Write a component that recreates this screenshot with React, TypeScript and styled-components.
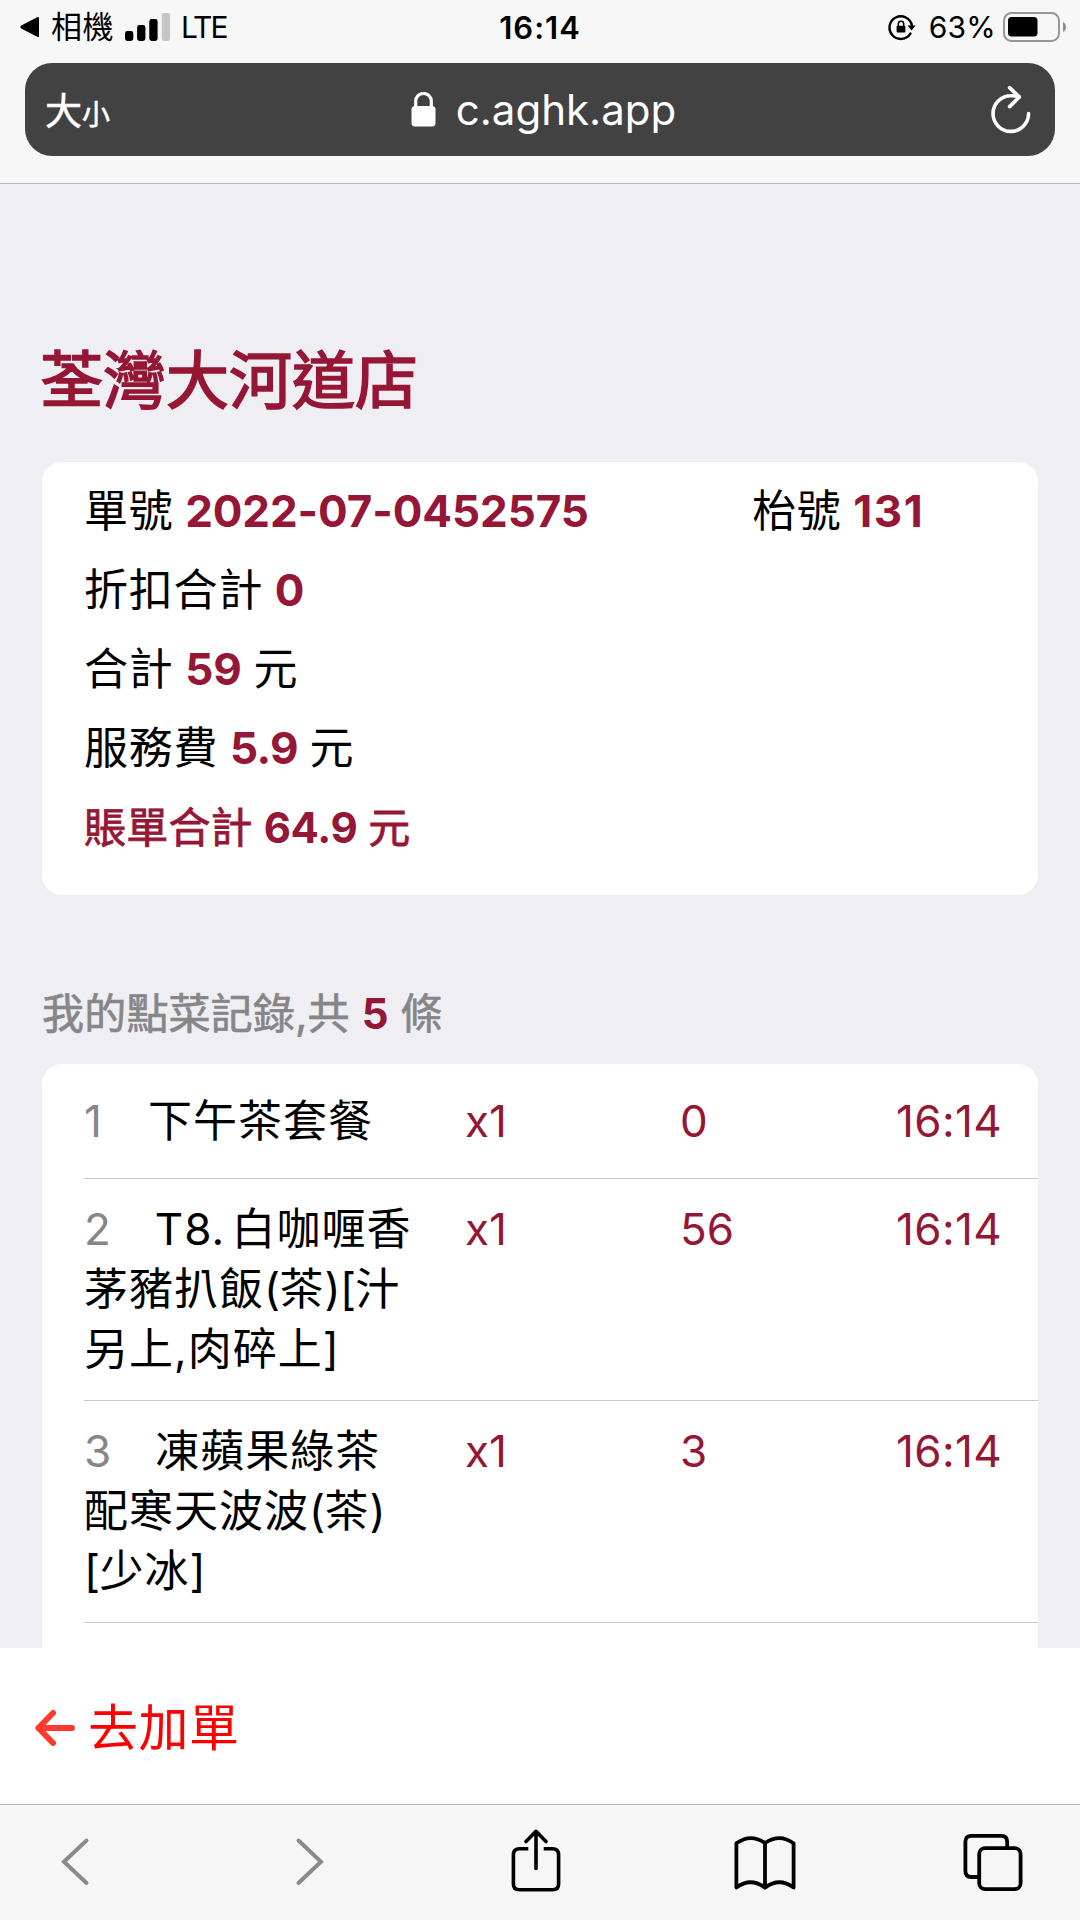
import React from 'react';
import styled, { createGlobalStyle } from 'styled-components';

const crimson = '#951735';

const GlobalStyle = createGlobalStyle`
  * { box-sizing: border-box; }
  body {
    margin: 0;
    background: #efeef3;
    font-family: Inter, "Noto Sans CJK TC", sans-serif;
    color: #000;
  }
`;

const Screen = styled.div`
  width: 1080px;
  height: 1920px;
  display: flex;
  flex-direction: column;
  overflow: hidden;
  background: #efeef3;
`;

const BrowserHeader = styled.header`
  flex: none;
  height: 184px;
  background: #f7f7f7;
  border-bottom: 1px solid #b4b4b6;
`;

const StatusBar = styled.div`
  height: 63px;
  padding: 0 14px 9px 20px;
  display: grid;
  grid-template-columns: 1fr auto 1fr;
  align-items: center;
  font-size: 30px;
`;

const StatusGroup = styled.div<{ $end?: boolean }>`
  display: flex;
  align-items: center;
  justify-content: ${(p) => (p.$end ? 'flex-end' : 'flex-start')};
`;

const BackApp = styled.span`
  margin: 0 11px 0 11px;
  font-size: 31px;
  line-height: 40px;
  letter-spacing: 0.5px;
`;

const Carrier = styled.span`
  margin-left: 10px;
  font-size: 30px;
  letter-spacing: -2px;
`;

const Clock = styled.span`
  margin-right: 6px;
  font-size: 31px;
  font-weight: 600;
  letter-spacing: 1px;
`;

const BatteryText = styled.span`
  margin: 0 7px 0 13px;
  font-size: 30px;
  letter-spacing: 0.2px;
`;

const AddressBar = styled.div`
  height: 93px;
  margin: 0 25px 0 25px;
  padding: 0 24px 0 20px;
  border-radius: 27px;
  background: #424242;
  color: #fff;
  display: grid;
  grid-template-columns: 1fr auto 1fr;
  align-items: center;
`;

const TextSize = styled.div`
  padding-top: 7px;
  font-size: 37px;
  line-height: 60px;
  -webkit-text-stroke: 0.6px #fff;
`;

const SmallGlyph = styled.span`
  font-size: 28px;
`;

const Url = styled.div`
  display: flex;
  align-items: center;
  gap: 20px;
  padding-left: 11px;
  font-size: 42px;
`;

const ReloadSlot = styled.div`
  display: flex;
  justify-content: flex-end;
`;

const Page = styled.main`
  flex: 1;
  min-height: 0;
  overflow: hidden;
  padding: 158px 42px 0 42px;
`;

const StoreName = styled.h1`
  margin: 0 0 0 -2px;
  height: 120px;
  line-height: 76px;
  font-size: 63px;
  font-weight: 400;
  -webkit-text-stroke: 1.7px ${crimson};
  color: ${crimson};
`;

const Card = styled.section`
  background: #fff;
  border-radius: 20px;
`;

const BillCard = styled(Card)`
  height: 433px;
  padding: 10px 42px 0;
`;

const BillRow = styled.div<{ $total?: boolean }>`
  display: grid;
  grid-template-columns: 668px 1fr;
  height: 79px;
  line-height: 79px;
  white-space: pre;
  font-size: ${(p) => (p.$total ? 42 : 44)}px;
  -webkit-text-stroke: ${(p) => (p.$total ? 0.8 : 0)}px ${crimson};
  letter-spacing: ${(p) => (p.$total ? 0.2 : 0.8)}px;
  word-spacing: ${(p) => (p.$total ? -1.2 : -1.6)}px;
  color: ${(p) => (p.$total ? crimson : '#000')};
`;

const Value = styled.b<{ $spacing?: number }>`
  font-weight: 700;
  letter-spacing: ${(p) => p.$spacing ?? 0}px;
  -webkit-text-stroke: 0;
  color: ${crimson};
`;

const SectionTitle = styled.h2`
  margin: 0;
  height: 169px;
  padding-top: 89px;
  line-height: 60px;
  font-size: 42px;
  font-weight: 400;
  letter-spacing: 0.2px;
  -webkit-text-stroke: 0.7px #868689;
  color: #868689;
`;

const OrderCard = styled(Card)`
  height: 700px;
  padding-left: 42px;
`;

const OrderRow = styled.div<{ $single?: boolean }>`
  display: grid;
  grid-template-columns: 381px 215px 215px 1fr;
  padding: ${(p) => (p.$single ? '27px 0' : '20px 0 21px')};
  line-height: 60px;
  font-size: 44px;
  border-bottom: 1px solid #c9c9cc;
  color: ${crimson};
`;

const Dish = styled.div`
  display: flex;
  flex-direction: column;
  color: #000;
`;

const DishLine = styled.div`
  display: flex;
  white-space: pre;
  letter-spacing: 1px;
  word-spacing: -7px;
`;

const Bracket = styled.span`
  letter-spacing: -0.6px;
`;

const Index = styled.span<{ $single?: boolean }>`
  margin-right: ${(p) => (p.$single ? 45 : 43)}px;
  color: #868689;
`;

const Time = styled.span`
  padding-left: 1px;
  letter-spacing: 0.4px;
`;

const ActionBar = styled.div`
  flex: none;
  height: 156px;
  padding: 0 0 0 35px;
  display: flex;
  align-items: flex-start;
  background: #fff;
`;

const AddOrder = styled.a`
  display: flex;
  align-items: center;
  gap: 12px;
  height: 160px;
  font-size: 50px;
  color: #f00;
`;

const AddLabel = styled.span`
  padding-bottom: 8px;
  letter-spacing: 0.5px;
`;

const Toolbar = styled.nav`
  flex: none;
  height: 116px;
  border-top: 1px solid #b8b8ba;
  background: #f6f6f6;
  display: grid;
  grid-template-columns: 150px 320px 131px 327px 129px;
  align-items: start;
  justify-items: center;
  padding-top: 22px;
`;

const orders = [
  { lines: ['下午茶套餐'], qty: 'x1', price: '0', time: '16:14' },
  { lines: ['T8. 白咖喱香', '茅豬扒飯(茶)[汁', '另上,肉碎上]'], qty: 'x1', price: '56', time: '16:14' },
  { lines: ['凍蘋果綠茶', '配寒天波波(茶)', '[少冰]'], qty: 'x1', price: '3', time: '16:14' },
];

const withBrackets = (text: string) =>
  text.split(/([()[\]]+)/).map((part, i) => (i % 2 ? <Bracket key={i}>{part}</Bracket> : part));

const SignalIcon = () => (
  <svg width="46" height="30" viewBox="0 0 46 30">
    <rect x="0" y="19" width="8.3" height="10" rx="2.4" />
    <rect x="12.1" y="13" width="8.3" height="16" rx="2.4" />
    <rect x="24.3" y="7" width="8.3" height="22" rx="2.4" />
    <rect x="36.8" y="1" width="8.3" height="28" rx="2.4" fill="#c5c5c5" />
  </svg>
);

const RotationLockIcon = () => (
  <svg width="28" height="28" viewBox="0 0 28 28" fill="none" stroke="#000" strokeWidth="2.4">
    <path d="M23.9 12.5 A11.3 11.3 0 1 0 22.4 20.6" strokeLinecap="round" />
    <path d="M19.6 12.4 H27.6 L23.6 17.6 Z" fill="#000" stroke="none" />
    <rect x="8.6" y="12.8" width="8.8" height="6.8" rx="1" fill="#000" stroke="none" />
    <path d="M10.3 13.4 V11 a2.7 2.7 0 0 1 5.4 0 V13.4" strokeWidth="1.5" />
  </svg>
);

const BatteryIcon = () => (
  <svg width="63" height="30" viewBox="0 0 63 30">
    <rect x="1" y="1" width="55" height="28" rx="7.5" fill="none" stroke="#979797" strokeWidth="2" />
    <rect x="5" y="5" width="29.5" height="19.6" rx="3.5" />
    <path d="M60 10 Q63 11.5 63 15 Q63 18.5 60 20 Z" fill="#8d8d8d" />
  </svg>
);

export default function App() {
  return (
    <Screen>
      <GlobalStyle />
      <BrowserHeader>
        <StatusBar>
          <StatusGroup>
            <svg width="20" height="22" viewBox="0 0 20 22">
              <path d="M19 2.2 V19.8 Q19 21.6 17.2 20.7 L1.2 12.4 Q-0.6 11 1.2 9.6 L17.2 1.3 Q19 0.4 19 2.2 Z" />
            </svg>
            <BackApp>相機</BackApp>
            <SignalIcon />
            <Carrier>LTE</Carrier>
          </StatusGroup>
          <Clock>16:14</Clock>
          <StatusGroup $end>
            <RotationLockIcon />
            <BatteryText>63%</BatteryText>
            <BatteryIcon />
          </StatusGroup>
        </StatusBar>
        <AddressBar>
          <TextSize>大<SmallGlyph>小</SmallGlyph></TextSize>
          <Url>
            <svg width="25" height="35" viewBox="0 0 25 35">
              <rect x="0.5" y="14" width="24" height="20.5" rx="3.5" fill="#fff" />
              <path d="M4.7 15 V9.2 a7.8 7.8 0 0 1 15.6 0 V15" fill="none" stroke="#fff" strokeWidth="3.2" />
            </svg>
            c.aghk.app
          </Url>
          <ReloadSlot>
            <svg width="40" height="50" viewBox="0 0 40 50" fill="none" stroke="#fff" strokeWidth="3.6" strokeLinecap="round" strokeLinejoin="round">
              <path d="M37.6 28.6 A17.8 17.8 0 1 1 19.8 10.8 Q24 10.6 28 11.7" />
              <path d="M18.6 2.6 L28.4 12 L18.6 21.6" />
            </svg>
          </ReloadSlot>
        </AddressBar>
      </BrowserHeader>

      <Page>
        <StoreName>荃灣大河道店</StoreName>
        <BillCard>
          <BillRow>
            <span>單號 <Value $spacing={-0.1}>2022-07-0452575</Value></span>
            <span>枱號 <Value $spacing={1.6}>131</Value></span>
          </BillRow>
          <BillRow><span>折扣合計 <Value>0</Value></span></BillRow>
          <BillRow><span>合計 <Value>59</Value> 元</span></BillRow>
          <BillRow><span>服務費 <Value $spacing={-0.6}>5.9</Value> 元</span></BillRow>
          <BillRow $total><span>賬單合計 <Value $spacing={-0.3}>64.9</Value> 元</span></BillRow>
        </BillCard>
        <SectionTitle>我的點菜記錄,共 <Value>5</Value> 條</SectionTitle>
        <OrderCard>
          {orders.map((order, row) => (
            <OrderRow key={row} $single={order.lines.length === 1}>
              <Dish>
                {order.lines.map((line, n) => (
                  <DishLine key={n}>
                    {n === 0 && <Index $single={order.lines.length === 1}>{row + 1}</Index>}
                    <span>{withBrackets(line)}</span>
                  </DishLine>
                ))}
              </Dish>
              <span>{order.qty}</span>
              <span>{order.price}</span>
              <Time>{order.time}</Time>
            </OrderRow>
          ))}
        </OrderCard>
      </Page>

      <ActionBar>
        <AddOrder>
          <svg width="41" height="38" viewBox="0 0 41 38" fill="none" stroke="#ff3b30" strokeWidth="6" strokeLinecap="round" strokeLinejoin="round">
            <path d="M18 4 L3.4 19 L18 34 M3.4 19 H37" />
          </svg>
          <AddLabel>去加單</AddLabel>
        </AddOrder>
      </ActionBar>

      <Toolbar>
        <svg width="60" height="70" viewBox="0 0 60 70" fill="none" stroke="#8a8a8a" strokeWidth="4" strokeLinecap="round" strokeLinejoin="miter">
          <path d="M41.5 13.5 L19 34.8 L41.5 56" />
        </svg>
        <svg width="60" height="70" viewBox="0 0 60 70" fill="none" stroke="#8a8a8a" strokeWidth="4" strokeLinecap="round" strokeLinejoin="miter">
          <path d="M18.5 13.5 L41 34.8 L18.5 56" />
        </svg>
        <svg width="60" height="70" viewBox="0 0 60 70" fill="none" stroke="#000" strokeWidth="3.6">
          <path d="M22.3 21.8 H13.5 Q7.4 21.8 7.4 28 V57 Q7.4 62.8 13.5 62.8 H46.5 Q52.6 62.8 52.6 57 V28 Q52.6 21.8 46.5 21.8 H37.7" />
          <path d="M30 41.5 V5.5 M20 14.5 L30 4.3 L40 14.5" strokeLinecap="round" strokeLinejoin="round" />
        </svg>
        <svg width="62" height="70" viewBox="1 0 62 70" fill="none" stroke="#000" strokeWidth="3.8" strokeLinejoin="round">
          <path d="M32 16 Q17.5 6 3.4 16.3 V60.6 Q17.5 50 32 60.6 Q46.5 50 60.6 60.6 V16.3 Q46.5 6 32 16 Z M32 16 V60.6" />
        </svg>
        <svg width="60" height="70" viewBox="0 0 60 70" fill="none" stroke="#000" strokeWidth="3.8">
          <path d="M15.5 50 H8.2 Q2.4 50 2.4 44 V14.8 Q2.4 8.8 8.2 8.8 H38.4 Q44.2 8.8 44.2 14.8 V21" />
          <rect x="16.2" y="21.2" width="41.4" height="41" rx="6" />
        </svg>
      </Toolbar>
    </Screen>
  );
}
